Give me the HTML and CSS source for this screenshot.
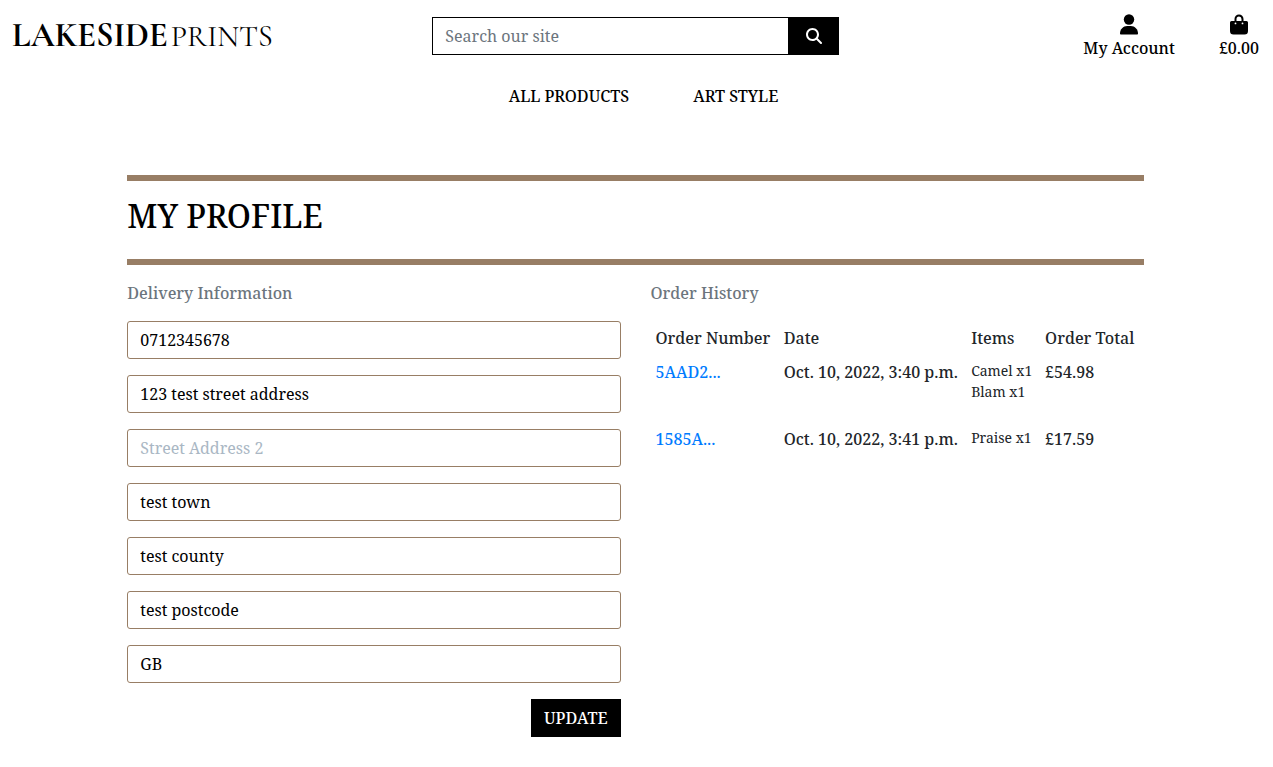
FILE: index.html
```html
<!DOCTYPE html>
<html lang="en">
<head>
<meta charset="utf-8">
<meta name="viewport" content="width=device-width, initial-scale=1">
<title>Lakeside Prints</title>
<link rel="stylesheet" href="styles.css">
</head>
<body>
<header class="site-header">
  <a class="logo" href="#"><span class="logo-bold">LAKESIDE</span><span class="logo-light">PRINTS</span></a>
  <form class="search">
    <input class="search-input" type="text" placeholder="Search our site" aria-label="Search our site">
    <button class="search-button" type="button" aria-label="Search">
      <svg width="16" height="16" viewBox="0 0 512 512" fill="#fff" aria-hidden="true"><path d="M416 208c0 45.900-14.900 88.300-40 122.700L502.600 457.400c12.500 12.500 12.500 32.800 0 45.300s-32.800 12.500-45.300 0L330.700 376c-34.400 25.200-76.800 40-122.700 40C93.100 416 0 322.900 0 208S93.100 0 208 0S416 93.100 416 208zM208 352a144 144 0 1 0 0-288 144 144 0 1 0 0 288z"/></svg>
    </button>
  </form>
  <div class="header-links">
    <a class="header-link" href="#">
      <svg width="18" height="21" viewBox="0 0 18 21" aria-hidden="true"><circle cx="9" cy="5.500" r="5.200"/><path d="M0 19.500C0 15.200 3.200 12 7.200 12h3.600c4 0 7.200 3.200 7.200 7.500 0 .6-.5 1-1 1H1c-.5 0-1-.4-1-1z"/></svg>
      <span>My Account</span>
    </a>
    <a class="header-link" href="#">
      <svg width="18" height="21" viewBox="0 0 18 21" aria-hidden="true"><path fill-rule="evenodd" d="M4.500 7V5a4.500 4.500 0 0 1 9 0v2h3Q18 7 18 8.500V17a3.500 3.500 0 0 1-3.500 3.500h-11A3.500 3.500 0 0 1 0 17V8.500Q0 7 1.500 7zM6.500 7h5V5a2.500 2.500 0 0 0-5 0zM5.500 8.500a.9.9 0 1 0 0 1.800.9.9 0 0 0 0-1.800zM12.500 8.500a.9.9 0 1 0 0 1.800.9.9 0 0 0 0-1.800z"/></svg>
      <span>£0.00</span>
    </a>
  </div>
</header>
<nav class="main-nav">
  <a href="#">ALL PRODUCTS</a>
  <a href="#">ART STYLE</a>
</nav>
<main class="profile">
  <h1 class="profile-title">MY PROFILE</h1>
  <div class="profile-columns">
    <section>
      <h2 class="section-title">Delivery Information</h2>
      <form class="delivery-form">
        <input class="field" type="text" aria-label="Phone Number" value="0712345678">
        <input class="field" type="text" aria-label="Street Address 1" value="123 test street address">
        <input class="field" type="text" aria-label="Street Address 2" placeholder="Street Address 2">
        <input class="field" type="text" aria-label="Town or City" value="test town">
        <input class="field" type="text" aria-label="County" value="test county">
        <input class="field" type="text" aria-label="Postal Code" value="test postcode">
        <input class="field" type="text" aria-label="Country" value="GB">
        <button class="update-button" type="button">UPDATE</button>
      </form>
    </section>
    <section>
      <h2 class="section-title">Order History</h2>
      <table class="orders">
        <thead>
          <tr><th class="col-number">Order Number</th><th class="col-date">Date</th><th class="col-items">Items</th><th>Order Total</th></tr>
        </thead>
        <tbody>
          <tr>
            <td><a href="#">5AAD2...</a></td>
            <td>Oct. 10, 2022, 3:40 p.m.</td>
            <td><ul class="items"><li>Camel x1</li><li>Blam x1</li></ul></td>
            <td>£54.98</td>
          </tr>
          <tr>
            <td><a href="#">1585A...</a></td>
            <td>Oct. 10, 2022, 3:41 p.m.</td>
            <td><ul class="items"><li>Praise x1</li></ul></td>
            <td>£17.59</td>
          </tr>
        </tbody>
      </table>
    </section>
  </div>
</main>
</body>
</html>
```
FILE: styles.css
```css
*, *::before, *::after { box-sizing: border-box; }

body {
  margin: 0;
  background: #fff;
  color: #212529;
  font-family: "Noto Serif", "DejaVu Serif Condensed", "DejaVu Serif", serif;
  font-size: 16px;
  font-weight: 500;
  line-height: 24px;
}

a { text-decoration: none; }

input, button { font: inherit; }

.site-header {
  display: grid;
  grid-template-columns: 1fr 1fr 1fr;
  align-items: center;
  height: 72px;
}

.logo {
  padding: 4px 0 0 12px;
  color: #000;
  font-family: "Cormorant Garamond", "Liberation Serif", serif;
  line-height: 32px;
  white-space: nowrap;
}

.logo-bold { font-size: 34px; font-weight: 700; }
.logo-light { margin-left: 3px; font-size: 30px; font-weight: 400; }

.search {
  display: flex;
  margin: 0 10px 0 8px;
}

.search-input {
  flex: 1;
  min-width: 0;
  height: 38px;
  padding: 0 12px;
  border: 1px solid #000;
  border-radius: 0;
  background: #fff;
}

.search-input::placeholder { color: #6c757d; opacity: 1; }

.search-button {
  display: flex;
  align-items: center;
  justify-content: center;
  width: 50px;
  height: 38px;
  padding: 0;
  border: 0;
  background: #000;
}

.header-links {
  display: flex;
  justify-content: flex-end;
  gap: 44px;
  padding: 2px 14px 0 0;
}

.header-link {
  display: flex;
  flex-direction: column;
  align-items: center;
  gap: 1px;
  color: #000;
  white-space: nowrap;
}

.main-nav {
  display: flex;
  justify-content: center;
  gap: 64px;
  padding: 12px 0 12px 14px;
}

.main-nav a { color: #000; }

.profile {
  margin: 55px 2px 0 0;
  padding: 0 10% 30px;
}

.profile-title {
  margin: 0 0 16px;
  padding: 15px 0 23px;
  border-top: 6px solid #987e65;
  border-bottom: 6px solid #987e65;
  color: #000;
  font-size: 32px;
  font-weight: 500;
  line-height: 40px;
}

.profile-columns {
  display: grid;
  grid-template-columns: 1fr 1fr;
  gap: 30px;
}

.section-title {
  margin: 0 0 16px;
  color: #6c757d;
  font-size: 16px;
  font-weight: 500;
  line-height: 24px;
}

.delivery-form {
  display: flex;
  flex-direction: column;
  gap: 16px;
}

.field {
  width: 100%;
  height: 38px;
  padding: 0 12px;
  border: 1px solid #987e65;
  border-radius: 3px;
  background: #fff;
  color: #000;
}

.field, .search-input { font-weight: 400; }

.field::placeholder { color: #aab7c4; opacity: 1; }

.update-button {
  align-self: flex-end;
  height: 38px;
  padding: 0 13px;
  border: 0;
  background: #000;
  color: #fff;
}

.orders {
  width: 100%;
  border-collapse: collapse;
  white-space: nowrap;
}

.orders th, .orders td {
  padding: 5px;
  font-weight: 500;
  text-align: left;
  vertical-align: top;
}

.col-number { width: 26%; }
.col-date { width: 38%; }
.col-items { width: 15%; }

.orders a { color: #007bff; }

.items {
  margin: 0 0 15px;
  padding: 0;
  list-style: none;
  font-size: 14px;
  font-weight: 400;
  line-height: 21px;
}
```
